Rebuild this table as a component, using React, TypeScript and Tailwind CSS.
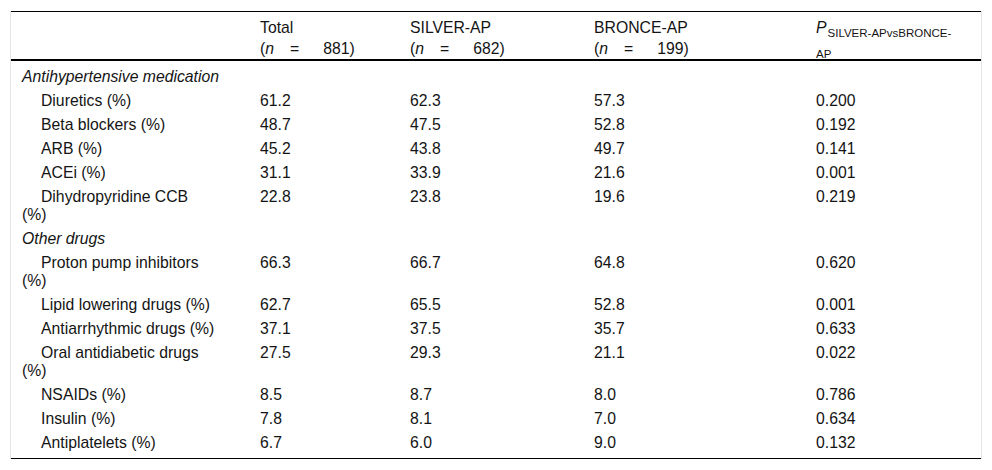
import React from "react";

type Row = {
	label: string;
	values: string[];
	section?: boolean;
};

const rows: Row[] = [
	{ label: "Antihypertensive medication", values: [], section: true },
	{ label: "Diuretics (%)", values: ["61.2", "62.3", "57.3", "0.200"] },
	{ label: "Beta blockers (%)", values: ["48.7", "47.5", "52.8", "0.192"] },
	{ label: "ARB (%)", values: ["45.2", "43.8", "49.7", "0.141"] },
	{ label: "ACEi (%)", values: ["31.1", "33.9", "21.6", "0.001"] },
	{ label: "Dihydropyridine CCB (%)", values: ["22.8", "23.8", "19.6", "0.219"] },
	{ label: "Other drugs", values: [], section: true },
	{ label: "Proton pump inhibitors (%)", values: ["66.3", "66.7", "64.8", "0.620"] },
	{ label: "Lipid lowering drugs (%)", values: ["62.7", "65.5", "52.8", "0.001"] },
	{ label: "Antiarrhythmic drugs (%)", values: ["37.1", "37.5", "35.7", "0.633"] },
	{ label: "Oral antidiabetic drugs (%)", values: ["27.5", "29.3", "21.1", "0.022"] },
	{ label: "NSAIDs (%)", values: ["8.5", "8.7", "8.0", "0.786"] },
	{ label: "Insulin (%)", values: ["7.8", "8.1", "7.0", "0.634"] },
	{ label: "Antiplatelets (%)", values: ["6.7", "6.0", "9.0", "0.132"] },
];

function Count({ n }: { n: string }) {
	return (
		<span>
			(<i>n</i>
			<span className="ml-[16px]">=</span>
			<span className="ml-[24px]">{n})</span>
		</span>
	);
}

export default function App() {
	return (
		<div className="bg-white w-[992px] h-[470px] pt-[11px] pl-[10px] font-['Liberation_Sans',Arial,sans-serif] text-[15.75px] text-[#141414]">
			<div className="w-[972px] border-x border-[#e4e4e4]">
				<table className="w-full table-fixed border-collapse border-t border-b border-black">
					<colgroup>
						<col className="w-[237px]" />
						<col className="w-[150px]" />
						<col className="w-[184px]" />
						<col className="w-[222px]" />
						<col />
					</colgroup>
					<thead>
						<tr className="border-b-2 border-black align-top text-left leading-[21px]">
							<th className="font-normal pl-[11px] pt-[5px] pb-0"></th>
							<th className="font-normal pl-[12px] pt-[5px] pb-0">
								Total
								<br />
								<Count n="881" />
							</th>
							<th className="font-normal pl-[12px] pt-[5px] pb-0">
								SILVER-AP
								<br />
								<Count n="682" />
							</th>
							<th className="font-normal pl-[12px] pt-[5px] pb-0">
								BRONCE-AP
								<br />
								<Count n="199" />
							</th>
							<th className="font-normal pl-[12px] pr-[25px] pt-[5px] pb-0">
								<i>P</i>
								<sub className="text-[11.5px] bottom-[-3.5px] ml-[1px] leading-none">SILVER-APvsBRONCE-AP</sub>
							</th>
						</tr>
					</thead>
					<tbody>
						{rows.map((row, idx) => {
							const pad = idx === 0 ? "pt-[7px] pb-[3px]" : idx === rows.length - 1 ? "pt-[3px] pb-[6px]" : "py-[3px]";
							return (
								<tr key={idx} className="align-top leading-[18px]">
									{row.section ? (
										<td colSpan={5} className={`pl-[11px] italic ${pad}`}>
											{row.label}
										</td>
									) : (
										<>
											<td className={`pl-[11px] pr-[32px] indent-[19px] ${pad}`}>{row.label}</td>
											{row.values.map((v, i) => (
												<td key={i} className={`pl-[12px] ${pad}`}>
													{v}
												</td>
											))}
										</>
									)}
								</tr>
							);
						})}
					</tbody>
				</table>
			</div>
		</div>
	);
}
